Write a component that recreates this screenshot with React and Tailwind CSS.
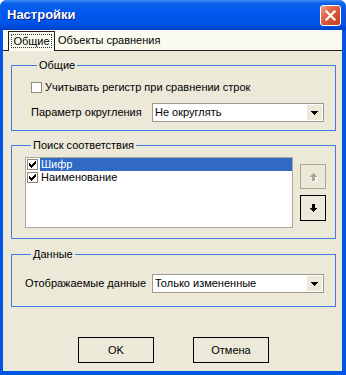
import React from "react";

function Check({ checked }) {
  return (
    <span className="w-[11px] h-[11px] border border-[#8d8b80] bg-white flex items-center justify-center shrink-0">
      {checked && (
        <svg width="7" height="7" viewBox="0 0 7 7" shapeRendering="crispEdges">
          <path d="M0 2h1v1h1v1h1V3h1V2h1V1h1V0h1v3H6v1H5v1H4v1H3v1H2V6H1V5H0z" fill="#000" />
        </svg>
      )}
    </span>
  );
}

function Combo({ value }) {
  return (
    <div className="w-[172px] h-[19px] border border-[#9c9a8e] bg-white flex items-center">
      <span className="flex-1 pl-[2px] leading-[13px]">{value}</span>
      <span className="w-[15px] h-[15px] mr-[1px] bg-[#ece9d8] flex items-center justify-center">
        <svg width="7" height="4" viewBox="0 0 7 4" shapeRendering="crispEdges">
          <path d="M0 0h7v1H6v1H5v1H4v1H3V3H2V2H1V1H0z" fill="#000" />
        </svg>
      </span>
    </div>
  );
}

function Arrow({ up, color }) {
  return (
    <svg width="7" height="8" viewBox="0 0 7 8" shapeRendering="crispEdges" className={up ? "rotate-180" : ""}>
      <path d="M2 0h3v4h2v1H6v1H5v1H4v1H3V7H2V6H1V5H0V4h2z" fill={color} />
    </svg>
  );
}

export default function App() {
  return (
    <div className="w-[346px] h-[375px] flex flex-col bg-[#0054e3] rounded-t-[7px] overflow-hidden font-['Liberation_Sans',Arial,sans-serif] text-[11px] text-black">
      <div className="h-[30px] shrink-0 flex items-center justify-between pl-[7px] pr-[5px] bg-[linear-gradient(to_bottom,#3d8ef8_0%,#0a5fe8_12%,#0058ee_40%,#0055e8_75%,#0049d6_92%,#003fc4_100%)]">
        <span className="font-bold text-[13px] leading-[16px] text-white [text-shadow:1px_1px_#0a1a80] -mt-[1px]">
          Настройки
        </span>
        <span className="w-[21px] h-[21px] rounded-[3px] border border-white bg-[linear-gradient(135deg,#f0a08a_0%,#e0603e_40%,#c83c1c_100%)] flex items-center justify-center">
          <svg width="11" height="11" viewBox="0 0 11 11">
            <path d="M1.5 1.5L9.5 9.5M9.5 1.5L1.5 9.5" stroke="#fff" strokeWidth="2.2" strokeLinecap="square" />
          </svg>
        </span>
      </div>

      <div className="flex-1 flex flex-col border-l-[3px] border-r-[4px] border-b-[4px] border-[#0055e5]">
        <div className="h-[21px] shrink-0 flex items-end pl-[5px] bg-[#fbfbf0] border-b border-[#222]">
          <div className="h-[20px] w-[47px] border border-b-0 border-[#222] bg-[#fbfbf0] -mb-[1px] p-[2px] pb-[3px] flex">
            <span className="flex-1 border border-dotted border-[#333] flex items-center justify-center leading-[13px]">
              Общие
            </span>
          </div>
          <span className="ml-[3px] h-[19px] flex items-center leading-[13px]">Объекты сравнения</span>
        </div>

        <div className="flex-1 bg-[#ece9d8] flex flex-col pl-[8px]">
          <fieldset className="w-[325px] mt-[8px] border border-[#3f7be0] pl-[19px] pb-[8px]">
            <legend className="ml-[6px] px-[2px] leading-[13px]">Общие</legend>
            <div className="mt-[9px] h-[13px] flex items-center gap-[3px]">
              <Check />
              <span className="leading-[13px]">Учитывать регистр при сравнении строк</span>
            </div>
            <div className="mt-[9px] flex items-center">
              <span className="w-[121px] leading-[13px]">Параметр округления</span>
              <Combo value="Не округлять" />
            </div>
          </fieldset>

          <fieldset className="w-[325px] mt-[8px] border border-[#3f7be0] pl-[13px] pb-[10px]">
            <legend className="ml-[6px] px-[2px] leading-[13px]">Поиск соответствия</legend>
            <div className="mt-[5px] flex items-start">
              <div className="w-[268px] h-[71px] border border-[#aca899] bg-white flex flex-col pt-0">
                <div className="h-[13px] flex items-center">
                  <span className="pl-[1px] pr-[2px] flex items-center"><Check checked /></span>
                  <span className="flex-1 h-[13px] bg-[#316ac5] text-white leading-[13px] pl-[1px]">Шифр</span>
                </div>
                <div className="h-[13px] flex items-center">
                  <span className="pl-[1px] pr-[2px] flex items-center"><Check checked /></span>
                  <span className="flex-1 leading-[13px] pl-[1px]">Наименование</span>
                </div>
              </div>
              <div className="ml-[7px] mt-[7px] flex flex-col gap-[6px]">
                <span className="w-[26px] h-[25px] border border-[#aca899] flex items-center justify-center">
                  <span className="relative flex">
                    <span className="absolute left-[1px] top-[1px] flex"><Arrow up color="#ffffff" /></span>
                    <span className="relative flex"><Arrow up color="#aca899" /></span>
                  </span>
                </span>
                <span className="w-[26px] h-[26px] border border-black flex items-center justify-center">
                  <Arrow color="#000" />
                </span>
              </div>
            </div>
          </fieldset>

          <fieldset className="w-[325px] mt-[9px] border border-[#3f7be0] pl-[13px] pb-[13px]">
            <legend className="ml-[6px] px-[2px] leading-[13px]">Данные</legend>
            <div className="mt-[13px] flex items-center">
              <span className="w-[127px] leading-[13px]">Отображаемые данные</span>
              <Combo value="Только измененные" />
            </div>
          </fieldset>

          <div className="mt-[30px] flex pl-[67px] gap-[39px]">
            <span className="w-[76px] h-[26px] border border-black flex items-center justify-center leading-[13px]">OK</span>
            <span className="w-[76px] h-[26px] border border-black flex items-center justify-center leading-[13px]">Отмена</span>
          </div>
        </div>
      </div>
    </div>
  );
}
